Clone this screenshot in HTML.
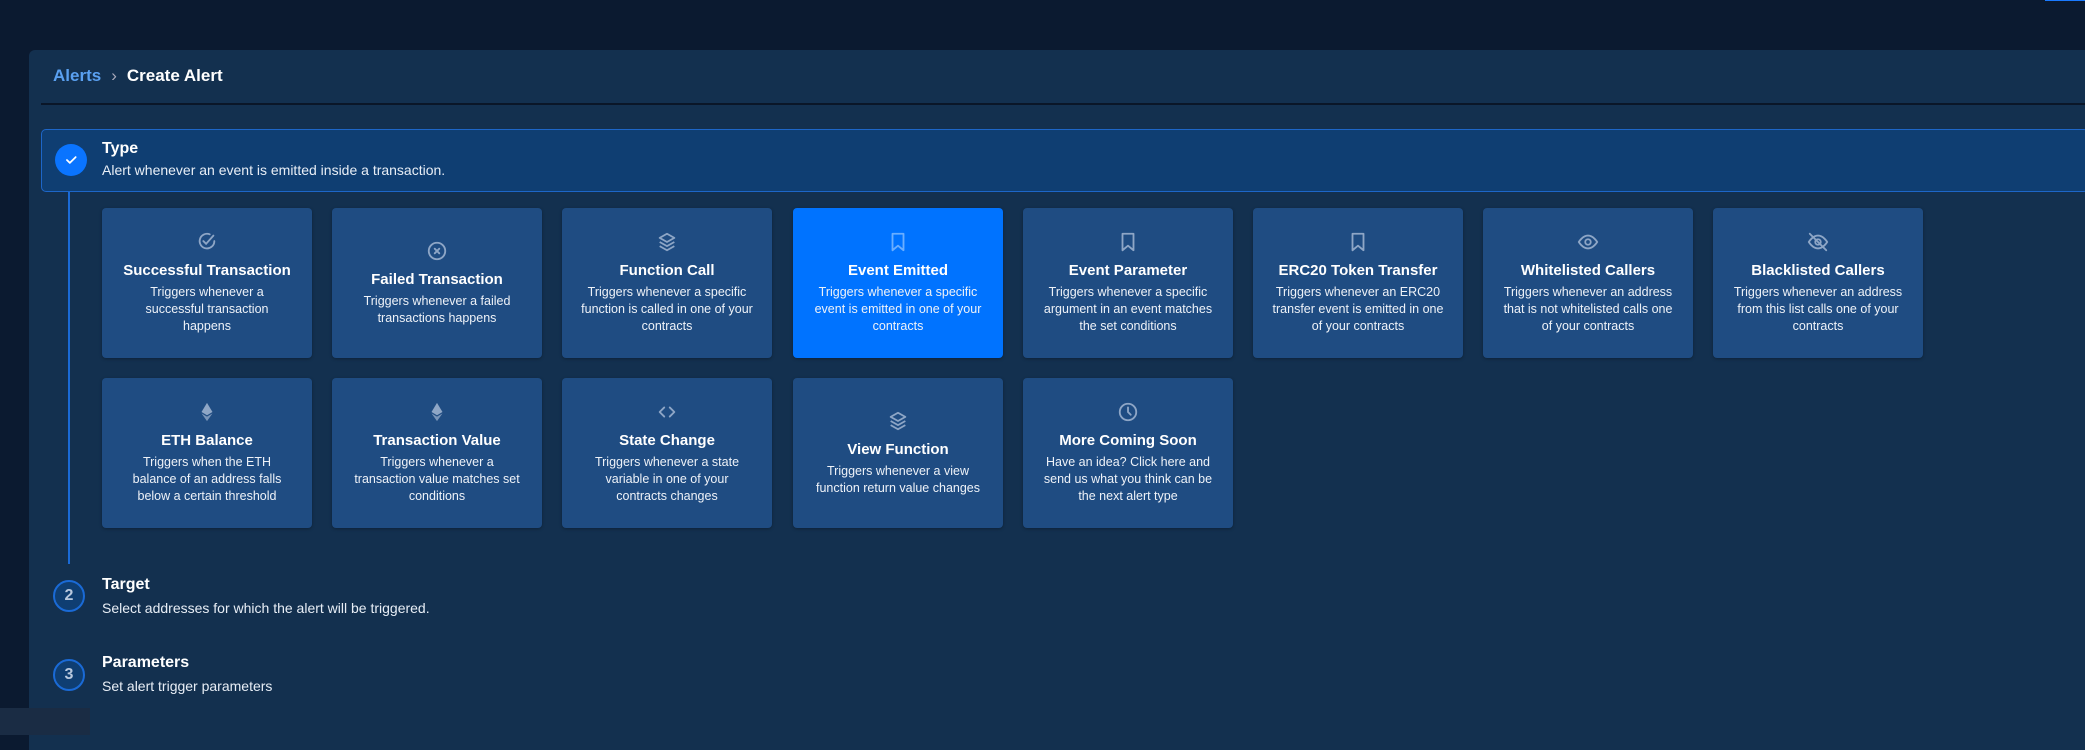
<!DOCTYPE html>
<html><head><meta charset="utf-8">
<style>
*{margin:0;padding:0;box-sizing:border-box}
body{width:2085px;height:735px;overflow:hidden;background:#0b1a30;font-family:"Liberation Sans",sans-serif;color:#fff;position:relative}
.topbar{position:absolute;right:0;top:0;width:40px;height:1px;background:#1a7aff}
.panel{position:absolute;left:29px;top:50px;right:0;height:700px;background:#13304f;border-radius:6px 0 0 0}
.bc{position:absolute;left:24px;top:16px;font-size:17px;font-weight:bold}
.bc .a{color:#5aa0f0}
.bc .sep{color:#aab;margin:0 10px;font-weight:normal}
.div{position:absolute;left:12px;right:0;top:53px;height:2px;background:#0a1628}
.typebox{position:absolute;left:12px;right:-4px;top:79px;height:63px;background:#0f3e72;border:1px solid #1d66c8;border-radius:5px}
.circ{position:absolute;width:32px;height:32px;border-radius:50%;text-align:center;font-weight:bold;font-size:16px;line-height:28px}
.c1{left:13px;top:14px;background:#0a74ff;line-height:32px}
.step{position:absolute}
.st{font-size:16px;font-weight:bold}
.ss{font-size:14px;margin-top:6px;color:#e8eef6}
.vline{position:absolute;left:39px;top:142px;width:2px;height:372px;background:#1a6ad6}
.card{position:absolute;width:210px;height:150px;background:#1f4c82;border-radius:4px;display:flex;flex-direction:column;align-items:center;justify-content:center;text-align:center;padding:0 19px;box-shadow:0 1px 3px rgba(0,0,0,.3)}
.card.sel{background:#0073ff}
.card svg{width:22px;height:22px;margin-bottom:9px}
.card h4{font-size:15px;font-weight:bold;margin-bottom:5px;white-space:nowrap}
.card p{font-size:12.5px;line-height:17px;color:#eef2f8}
.c2{border:2px solid #1a6ad6;background:#0f3e72;color:#b8c8de}
</style></head><body>
<div class="topbar"></div>
<div class="panel">
<div class="bc"><span class="a">Alerts</span><span class="sep">›</span>Create Alert</div>
<div class="div"></div>
<div class="typebox">
 <div class="circ c1"><svg width="14" height="14" viewBox="0 0 24 24" fill="none" stroke="#fff" stroke-width="3" stroke-linecap="round" stroke-linejoin="round" style="vertical-align:middle"><path d="M5 12l5 5L20 7"/></svg></div>
 <div class="step" style="left:60px;top:10px"><div class="st">Type</div><div class="ss" style="margin-top:4px">Alert whenever an event is emitted inside a transaction.</div></div>
</div>
<div class="vline"></div>
<div class="circ c2" style="left:24px;top:530px">2</div>
<div class="step" style="left:73px;top:526px"><div class="st">Target</div><div class="ss">Select addresses for which the alert will be triggered.</div></div>
<div class="circ c2" style="left:24px;top:609px">3</div>
<div class="step" style="left:73px;top:604px"><div class="st">Parameters</div><div class="ss">Set alert trigger parameters</div></div>
</div>

<div class="card" style="left:102px;top:208px"><svg viewBox="0 0 24 24" fill="none" stroke="#8ea6c6" stroke-width="2" stroke-linecap="round"><path d="M20 11a8 8 0 1 1-5-7.4"/><path d="M8 11l3 3 8-9"/></svg><h4>Successful Transaction</h4><p>Triggers whenever a successful transaction happens</p></div>
<div class="card" style="left:332px;top:208px"><svg viewBox="0 0 24 24" fill="none" stroke="#8ea6c6" stroke-width="2" stroke-linecap="round"><circle cx="12" cy="12" r="9"/><path d="M9.5 9.5l5 5M14.5 9.5l-5 5"/></svg><h4>Failed Transaction</h4><p>Triggers whenever a failed transactions happens</p></div>
<div class="card" style="left:562px;top:208px"><svg viewBox="0 0 24 24" fill="none" stroke="#8ea6c6" stroke-width="2" stroke-linejoin="round"><path d="M12 3l8 4.5-8 4.5-8-4.5z"/><path d="M4 12l8 4.5 8-4.5M4 16.5l8 4.5 8-4.5"/></svg><h4>Function Call</h4><p>Triggers whenever a specific function is called in one of your contracts</p></div>
<div class="card sel" style="left:793px;top:208px"><svg viewBox="0 0 24 24" fill="none" stroke="#6aaeff" stroke-width="2" stroke-linejoin="round"><path d="M6 3h12v18l-6-5-6 5z"/></svg><h4>Event Emitted</h4><p>Triggers whenever a specific event is emitted in one of your contracts</p></div>
<div class="card" style="left:1023px;top:208px"><svg viewBox="0 0 24 24" fill="none" stroke="#8ea6c6" stroke-width="2" stroke-linejoin="round"><path d="M6 3h12v18l-6-5-6 5z"/></svg><h4>Event Parameter</h4><p>Triggers whenever a specific argument in an event matches the set conditions</p></div>
<div class="card" style="left:1253px;top:208px"><svg viewBox="0 0 24 24" fill="none" stroke="#8ea6c6" stroke-width="2" stroke-linejoin="round"><path d="M6 3h12v18l-6-5-6 5z"/></svg><h4>ERC20 Token Transfer</h4><p>Triggers whenever an ERC20 transfer event is emitted in one of your contracts</p></div>
<div class="card" style="left:1483px;top:208px"><svg viewBox="0 0 24 24" fill="none" stroke="#8ea6c6" stroke-width="2"><path d="M2 12s4-7 10-7 10 7 10 7-4 7-10 7S2 12 2 12z"/><circle cx="12" cy="12" r="3"/></svg><h4>Whitelisted Callers</h4><p>Triggers whenever an address that is not whitelisted calls one of your contracts</p></div>
<div class="card" style="left:1713px;top:208px"><svg viewBox="0 0 24 24" fill="none" stroke="#8ea6c6" stroke-width="2" stroke-linecap="round"><path d="M2 12s4-7 10-7 10 7 10 7-4 7-10 7S2 12 2 12z"/><circle cx="12" cy="12" r="3"/><path d="M3 3l18 18"/></svg><h4>Blacklisted Callers</h4><p>Triggers whenever an address from this list calls one of your contracts</p></div>

<div class="card" style="left:102px;top:378px"><svg viewBox="0 0 24 24" fill="#8ea6c6"><path d="M12 2l6 10-6 3.5L6 12z"/><path d="M6 13.5l6 3.5 6-3.5-6 8.5z" opacity=".8"/></svg><h4>ETH Balance</h4><p>Triggers when the ETH balance of an address falls below a certain threshold</p></div>
<div class="card" style="left:332px;top:378px"><svg viewBox="0 0 24 24" fill="#8ea6c6"><path d="M12 2l6 10-6 3.5L6 12z"/><path d="M6 13.5l6 3.5 6-3.5-6 8.5z" opacity=".8"/></svg><h4>Transaction Value</h4><p>Triggers whenever a transaction value matches set conditions</p></div>
<div class="card" style="left:562px;top:378px"><svg viewBox="0 0 24 24" fill="none" stroke="#8ea6c6" stroke-width="2" stroke-linecap="round" stroke-linejoin="round"><path d="M9 7l-5 5 5 5M15 7l5 5-5 5"/></svg><h4>State Change</h4><p>Triggers whenever a state variable in one of your contracts changes</p></div>
<div class="card" style="left:793px;top:378px"><svg viewBox="0 0 24 24" fill="none" stroke="#8ea6c6" stroke-width="2" stroke-linejoin="round"><path d="M12 3l8 4.5-8 4.5-8-4.5z"/><path d="M4 12l8 4.5 8-4.5M4 16.5l8 4.5 8-4.5"/></svg><h4>View Function</h4><p>Triggers whenever a view function return value changes</p></div>
<div class="card" style="left:1023px;top:378px"><svg viewBox="0 0 24 24" fill="none" stroke="#8ea6c6" stroke-width="2" stroke-linecap="round"><circle cx="12" cy="12" r="9"/><path d="M12 7v5l3 3"/></svg><h4>More Coming Soon</h4><p>Have an idea? Click here and send us what you think can be the next alert type</p></div>

<div style="position:absolute;left:0;top:708px;width:90px;height:27px;background:#1a2c44"></div>
</body></html>
